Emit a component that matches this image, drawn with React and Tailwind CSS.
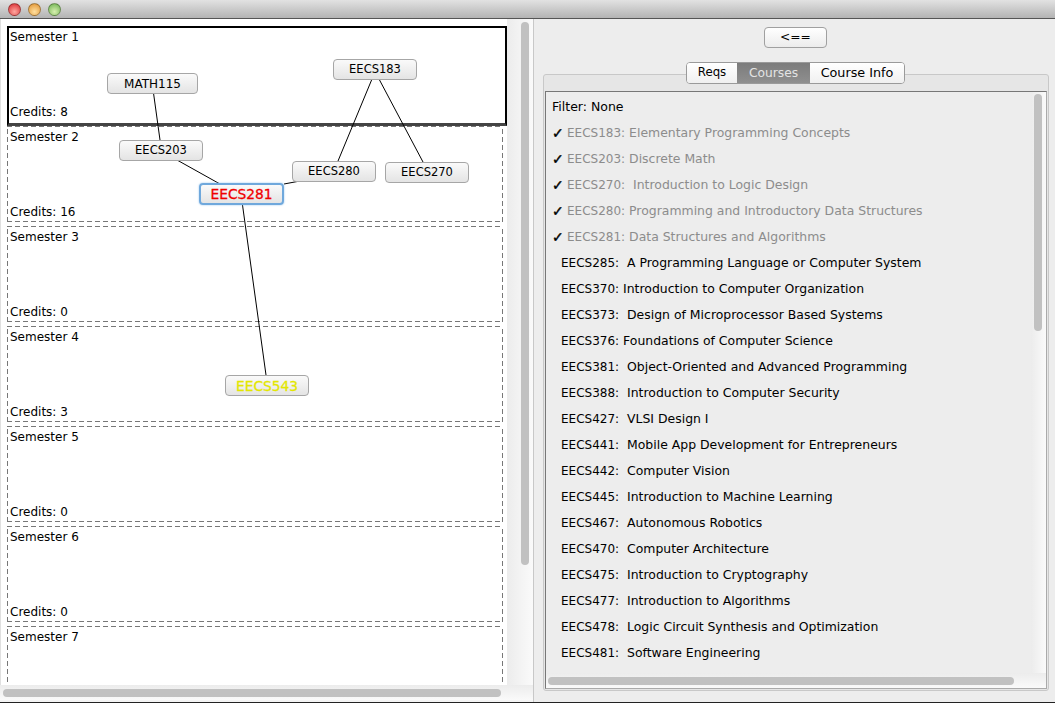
const semesters = [
  { name: 'Semester 1', credits: 8 },
  { name: 'Semester 2', credits: 16 },
  { name: 'Semester 3', credits: 0 },
  { name: 'Semester 4', credits: 3 },
  { name: 'Semester 5', credits: 0 },
  { name: 'Semester 6', credits: 0 },
  { name: 'Semester 7', credits: null },
];

const nodes = [
  { label: 'MATH115', cls: 'left-[107px] top-[54px] w-[91px] h-[21px] text-black text-[12px]' },
  { label: 'EECS183', cls: 'left-[333px] top-[40px] w-[84px] h-[21px] text-black text-[11.5px]' },
  { label: 'EECS203', cls: 'left-[119px] top-[121px] w-[84px] h-[21px] text-black text-[11.5px]' },
  { label: 'EECS280', cls: 'left-[292px] top-[142px] w-[84px] h-[21px] text-black text-[11.5px]' },
  { label: 'EECS270', cls: 'left-[385px] top-[143px] w-[84px] h-[21px] text-black text-[11.5px]' },
  { label: 'EECS543', cls: 'left-[225px] top-[356px] w-[84px] h-[21px] text-[#e3e600] text-[13.75px] [-webkit-text-stroke:0.3px_#e3e600]' },
];

const lines = [
  [153.5, 74, 160, 121],
  [177, 141, 220, 165],
  [284, 165, 300, 162],
  [372, 60, 338, 142],
  [379, 60, 423, 143],
  [242.5, 186, 266, 356],
];

const courses = [
  ['EECS183: Elementary Programming Concepts', true],
  ['EECS203: Discrete Math', true],
  ['EECS270:  Introduction to Logic Design', true],
  ['EECS280: Programming and Introductory Data Structures', true],
  ['EECS281: Data Structures and Algorithms', true],
  ['EECS285:  A Programming Language or Computer System'],
  ['EECS370: Introduction to Computer Organization'],
  ['EECS373:  Design of Microprocessor Based Systems'],
  ['EECS376: Foundations of Computer Science'],
  ['EECS381:  Object-Oriented and Advanced Programming'],
  ['EECS388:  Introduction to Computer Security'],
  ['EECS427:  VLSI Design I'],
  ['EECS441:  Mobile App Development for Entrepreneurs'],
  ['EECS442:  Computer Vision'],
  ['EECS445:  Introduction to Machine Learning'],
  ['EECS467:  Autonomous Robotics'],
  ['EECS470:  Computer Architecture'],
  ['EECS475:  Introduction to Cryptography'],
  ['EECS477:  Introduction to Algorithms'],
  ['EECS478:  Logic Circuit Synthesis and Optimization'],
  ['EECS481:  Software Engineering'],
];

// long dashes, plain border-dashed comes out too short at 1px
const dashed =
  '[background:repeating-linear-gradient(90deg,#777_0_5px,transparent_5px_8px)_top/100%_1px_no-repeat,repeating-linear-gradient(90deg,#777_0_5px,transparent_5px_8px)_bottom/100%_1px_no-repeat,repeating-linear-gradient(0deg,#777_0_5px,transparent_5px_8px)_left/1px_100%_no-repeat,repeating-linear-gradient(0deg,#777_0_5px,transparent_5px_8px)_right/1px_100%_no-repeat]';

function Light({ cls }) {
  return <span className={`w-[13px] h-[13px] rounded-full border border-[#00000050] ${cls}`} />;
}

function Semester({ semester, index }) {
  const first = index === 0;
  return (
    <div
      className={
        first
          ? 'w-[500px] h-[100px] shrink-0 border-2 border-black border-b-[3px] border-b-[#444] flex flex-col justify-between pl-[1px] pb-[2px]'
          : `w-[496px] h-[96px] shrink-0 mb-[4px] flex flex-col justify-between pl-[3px] pt-[2px] pb-[1px] ${dashed}`
      }
    >
      <span className="leading-[18px]">{semester.name}</span>
      {semester.credits !== null && <span className="leading-[18px]">Credits: {semester.credits}</span>}
    </div>
  );
}

function GraphPane() {
  return (
    <div className="w-[534px] shrink-0 flex flex-col border-r border-[#c8c8c8] bg-[#f4f4f4]">
      <div className="flex h-[666px]">
        <div className="relative w-[507px] h-full overflow-hidden bg-white pl-[6px] pt-[7px] border-l border-l-[#e0e0e0] text-[12px]">
          {semesters.map((s, i) => (
            <Semester key={s.name} semester={s} index={i} />
          ))}
          <svg className="absolute left-[-1px] top-0" width="507" height="666">
            {lines.map(([x1, y1, x2, y2]) => (
              <line key={`${x1}-${y1}`} x1={x1} y1={y1} x2={x2} y2={y2} stroke="black" strokeWidth="1" />
            ))}
          </svg>
          {nodes.map((n) => (
            <div
              key={n.label}
              className={`absolute ml-[-1px] pt-[1px] flex items-center justify-center rounded-[4px] border border-[#a6a6a6] bg-gradient-to-b from-[#fafafa] via-[#efefef] to-[#e4e4e4] ${n.cls}`}
            >
              {n.label}
            </div>
          ))}
          <div className="absolute left-[198px] top-[164px] w-[85px] h-[22px] pt-[1px] flex items-center justify-center rounded-[4px] border-2 border-[#6fa8dc] bg-gradient-to-b from-[#fafafa] via-[#efefef] to-[#e4e4e4] text-[#f00000] text-[13.75px] [-webkit-text-stroke:0.3px_#f00000] shadow-[0_0_2px_#8fc0ee]">
            EECS281
          </div>
        </div>
        <div className="flex-1 pl-[14px] pt-[3px] bg-gradient-to-r from-[#ececec] to-[#fafafa]">
          <div className="w-[8px] h-[543px] rounded-full bg-[#c1c1c1]" />
        </div>
      </div>
      <div className="h-[15px] flex items-center pl-[3px] bg-gradient-to-b from-[#ececec] to-[#fafafa]">
        <div className="w-[498px] h-[8px] rounded-full bg-[#c1c1c1]" />
      </div>
    </div>
  );
}

function CoursesPane() {
  return (
    <div className="flex-1 flex flex-col bg-[#ededed] pt-[8px]">
      <button className="ml-[230px] w-[63px] h-[21px] rounded-[4px] border border-[#a0a0a0] bg-gradient-to-b from-white to-[#ececec] flex items-center justify-center">
        {'<=='}
      </button>
      <div className="relative mt-[26px] ml-[9px] w-[506px] h-[617px] rounded-[3px] border border-[#c8c8c8] bg-[#e6e6e6] p-[1px] pt-[16px]">
        <div className="absolute left-[142px] top-[-13px] flex h-[22px] rounded-[4px] border border-[#9a9a9a] bg-white overflow-hidden">
          <span className="w-[50px] flex items-center justify-center bg-gradient-to-b from-white to-[#f0f0f0] text-[11.75px]">Reqs</span>
          <span className="w-[73px] flex items-center justify-center bg-gradient-to-b from-[#7c7c7c] to-[#8f8f8f] text-[#e4e4e4]">Courses</span>
          <span className="w-[94px] flex items-center justify-center bg-gradient-to-b from-white to-[#f0f0f0] text-[12.75px]">Course Info</span>
        </div>
        <div className="h-[598px] border border-[#777] border-b-[#aaa] border-r-[#aaa] flex flex-col bg-[#ededed]">
          <div className="flex flex-1 min-h-0">
            <div className="flex-1 overflow-hidden pt-[2px] pl-[6px]">
              <div className="h-[26px] flex items-center text-[12.5px]">Filter: None</div>
              {courses.map(([text, done]) => (
                <div key={text} className="h-[26px] flex items-center whitespace-pre">
                  {done ? (
                    <span className="w-[15px] shrink-0 text-[14px] text-black [-webkit-text-stroke:0.4px_#000]">✓</span>
                  ) : (
                    <span className="w-[9px] shrink-0" />
                  )}
                  <span className={done ? 'text-[#8c8c8c]' : 'text-black'}>
                    <span className="text-[12px]">{text.slice(0, 8)}</span>
                    <span className="text-[12.45px]">{text.slice(8)}</span>
                  </span>
                </div>
              ))}
            </div>
            <div className="w-[15px] shrink-0 pl-[3px] pt-[2px] bg-gradient-to-r from-[#ececec] to-[#fafafa]">
              <div className="w-[8px] h-[237px] rounded-full bg-[#c1c1c1]" />
            </div>
          </div>
          <div className="h-[15px] flex items-center pl-[2px] bg-gradient-to-b from-[#ececec] to-[#fafafa]">
            <div className="w-[466px] h-[8px] rounded-full bg-[#c1c1c1]" />
          </div>
        </div>
      </div>
    </div>
  );
}

export default function App() {
  return (
    <div className="w-[1055px] h-[703px] overflow-hidden flex flex-col bg-[#ededed] text-black text-[12.25px] font-['DejaVu_Sans',sans-serif]">
      <div className="h-[19px] shrink-0 flex items-center gap-[7px] pl-[8px] bg-gradient-to-b from-[#e2e2e2] to-[#b4b4b4] border-b border-[#555]">
        <Light cls="bg-[radial-gradient(circle_at_50%_70%,#ffa8a0,#d8262c)]" />
        <Light cls="bg-[radial-gradient(circle_at_50%_70%,#ffe0a0,#e0902c)]" />
        <Light cls="bg-[radial-gradient(circle_at_50%_70%,#d8f0b0,#6ab04c)]" />
      </div>
      <div className="flex-1 min-h-0 flex">
        <GraphPane />
        <CoursesPane />
      </div>
      <div className="h-[1px] shrink-0 bg-[#222]" />
    </div>
  );
}
